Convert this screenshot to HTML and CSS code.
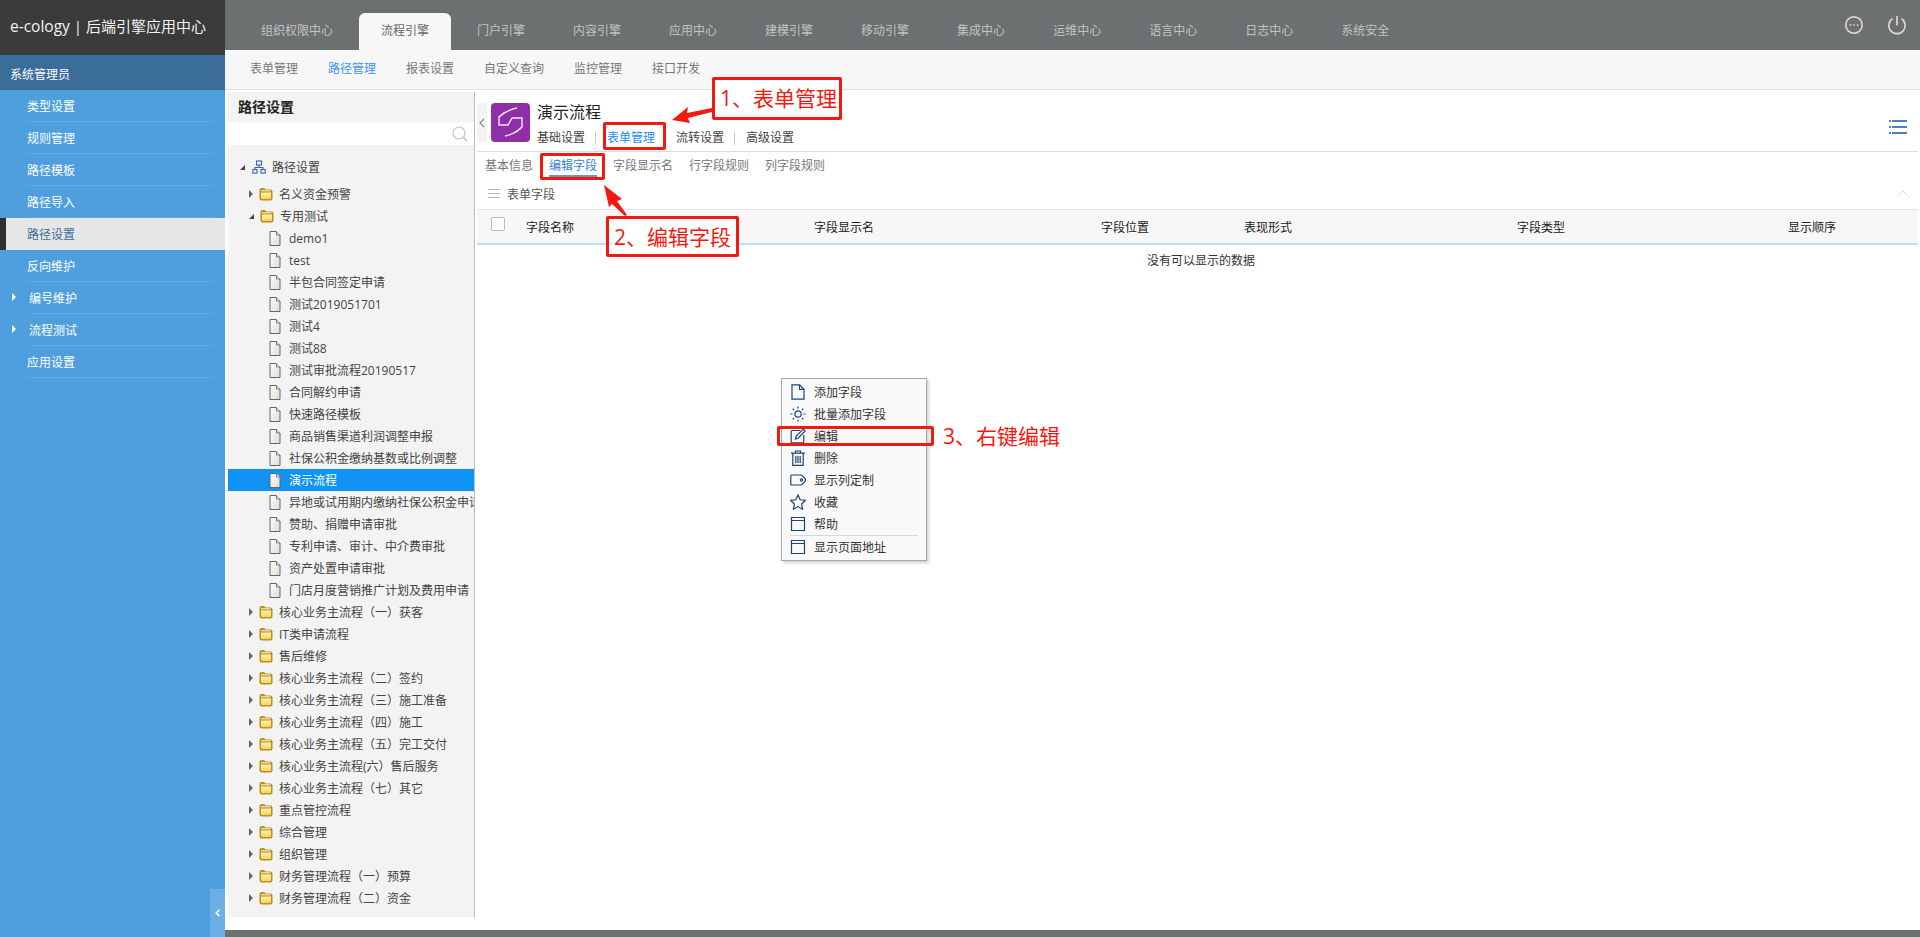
FILE: index.html
```html
<!DOCTYPE html>
<html lang="zh-CN">
<head>
    <meta charset="UTF-8">
    <link rel="stylesheet" href="styles.css">
    <title>e-cology | 后端引擎应用中心</title>
</head>
<body>
<svg class="sprites" width="0" height="0">
    <defs>
        <linearGradient id="folder-fill" x1="0" y1="0" x2="0" y2="1">
            <stop offset="0" stop-color="#fff3b0"/>
            <stop offset="1" stop-color="#f5d45e"/>
        </linearGradient>
        <linearGradient id="doc-fill" x1="0" y1="0" x2="1" y2="1">
            <stop offset="0" stop-color="#ffffff"/>
            <stop offset="1" stop-color="#dcdcd0"/>
        </linearGradient>
    </defs>
    <symbol id="folder" viewBox="0 0 14 14">
        <path d="M.5 3Q.5 1 2.5 1H5L6.5 2.5H11.5Q13.5 2.5 13.5 4.5V11.5Q13.5 13.5 11.5 13.5H2.5Q.5 13.5 .5 11.5Z" fill="#b8921f"/>
        <path d="M2 5.5H12V11Q12 12 11 12H3Q2 12 2 11Z" fill="url(#folder-fill)"/>
        <path d="M2 3.2H11.5V4.4H2Z" fill="#f7ecc0"/>
    </symbol>
    <symbol id="doc" viewBox="0 0 12 15">
        <path d="M1 .5H7.5L11 4V14.5H1Z" fill="url(#doc-fill)" stroke="#666"/>
        <path d="M7.5 .5V4H11" fill="#eee" stroke="#777"/>
    </symbol>
</svg>

<aside class="sidebar">
    <div class="brand"><span class="brand-en">e-cology</span> | 后端引擎应用中心</div>
    <div class="user">系统管理员</div>
    <ul class="side-menu">
        <li>类型设置</li>
        <li>规则管理</li>
        <li>路径模板</li>
        <li>路径导入</li>
        <li class="active">路径设置</li>
        <li>反向维护</li>
        <li class="has-sub">编号维护</li>
        <li class="has-sub">流程测试</li>
        <li>应用设置</li>
    </ul>
    <div class="collapse">
        <svg width="6" height="8" viewBox="0 0 6 8"><path d="M4.5 .8L1.3 4L4.5 7.2" fill="none" stroke="#fff" stroke-width="1.6"/></svg>
    </div>
</aside>

<div class="page">
    <header class="topbar">
        <nav class="top-tabs">
            <a>组织权限中心</a>
            <a class="active">流程引擎</a>
            <a>门户引擎</a>
            <a>内容引擎</a>
            <a>应用中心</a>
            <a>建模引擎</a>
            <a>移动引擎</a>
            <a>集成中心</a>
            <a>运维中心</a>
            <a>语言中心</a>
            <a>日志中心</a>
            <a>系统安全</a>
        </nav>
        <div class="top-icons">
            <svg width="20" height="20" viewBox="0 0 20 20" fill="none" stroke="#d6d6d6" stroke-width="1.7">
                <circle cx="10" cy="10" r="8.2"/>
                <path d="M5.6 10h1.7M9.2 10h1.7M12.8 10h1.7"/>
            </svg>
            <svg width="20" height="20" viewBox="0 0 20 20" fill="none" stroke="#d6d6d6" stroke-width="1.7">
                <path d="M5.5 3.6A8.2 8.2 0 1 0 14.5 3.6"/>
                <path d="M10 1V10.5"/>
            </svg>
        </div>
    </header>

    <nav class="sub-nav">
        <a>表单管理</a>
        <a class="active">路径管理</a>
        <a>报表设置</a>
        <a>自定义查询</a>
        <a>监控管理</a>
        <a>接口开发</a>
    </nav>

    <div class="workspace">
        <section class="tree-panel">
            <h3>路径设置</h3>
            <div class="tree-search">
                <svg width="16" height="16" viewBox="0 0 16 16" fill="none" stroke="#c4c4c4" stroke-width="1.2">
                    <circle cx="7" cy="7" r="6"/>
                    <path d="M11.5 11.5L15 15" stroke-width="1.6"/>
                </svg>
            </div>
            <div class="tree">
                <div class="row root">
                    <i class="tri open"></i>
                    <svg class="org" width="14" height="14" viewBox="0 0 14 14" fill="none" stroke="#3d62b5" stroke-width="1.1">
                        <rect x="4.5" y="1" width="5" height="4"/>
                        <rect x=".8" y="9.5" width="4.2" height="3.6"/>
                        <rect x="9" y="9.5" width="4.2" height="3.6"/>
                        <path d="M7 5V7.5M3 9.5V7.5H11V9.5"/>
                    </svg>
                    <span>路径设置</span>
                </div>
                <div class="rows" id="tree-rows"></div>
            </div>
        </section>

        <main class="content">
            <div class="flow-head">
                <div class="back">
                    <svg width="6" height="10" viewBox="0 0 6 10"><path d="M5 1L1 5L5 9" fill="none" stroke="#888" stroke-width="1.2"/></svg>
                </div>
                <div class="flow-icon">
                    <svg width="39" height="39" viewBox="0 0 39 39" fill="none" stroke="#f3e6f7" stroke-width="1.4">
                        <path d="M26 5Q18 6 8 14V22H17L21 15H31V24Q24 31 14 33"/>
                        <path d="M8 14L14 9M31 24L25 29"/>
                    </svg>
                </div>
                <div class="flow-info">
                    <div class="flow-title">演示流程</div>
                    <nav class="flow-nav">
                        <a>基础设置</a><i></i>
                        <a class="active">表单管理</a>
                        <a class="next">流转设置</a><i></i>
                        <a>高级设置</a>
                    </nav>
                </div>
                <svg class="list-icon" width="18" height="14" viewBox="0 0 18 14" fill="#4a80c4">
                    <rect y="0" width="2" height="2"/><rect x="3" y="0" width="15" height="2"/>
                    <rect y="6" width="2" height="2"/><rect x="3" y="6" width="15" height="2"/>
                    <rect y="12" width="2" height="2"/><rect x="3" y="12" width="15" height="2"/>
                </svg>
            </div>

            <nav class="form-tabs">
                <a>基本信息</a>
                <a class="active">编辑字段</a>
                <a>字段显示名</a>
                <a>行字段规则</a>
                <a>列字段规则</a>
            </nav>

            <div class="group-title">
                <svg width="12" height="9" viewBox="0 0 12 9" fill="#b5b5b5">
                    <rect width="12" height="1"/><rect y="4" width="12" height="1"/><rect y="8" width="12" height="1"/>
                </svg>
                <span>表单字段</span>
                <svg class="fold" width="12" height="7" viewBox="0 0 12 7"><path d="M.5 6.5L6 1L11.5 6.5" fill="none" stroke="#dcdcdc"/></svg>
            </div>

            <div class="grid-head">
                <span><i class="check"></i></span>
                <span>字段名称</span>
                <span>字段显示名</span>
                <span>字段位置</span>
                <span>表现形式</span>
                <span>字段类型</span>
                <span>显示顺序</span>
            </div>
            <div class="grid-empty">没有可以显示的数据</div>
        </main>
    </div>
</div>

<ul class="context-menu">
    <li>
        <svg viewBox="0 0 16 16"><path d="M2 .8H9.5L14 5.3V15.2H2Z"/><path d="M9.5 .8V5.3H14"/></svg>添加字段
    </li>
    <li>
        <svg viewBox="0 0 16 16"><circle cx="8" cy="8" r="3.2"/><path d="M8 .5V2.5M8 13.5V15.5M.5 8H2.5M13.5 8H15.5M2.7 2.7L4 4M12 12L13.3 13.3M2.7 13.3L4 12M12 4L13.3 2.7"/></svg>批量添加字段
    </li>
    <li>
        <svg viewBox="0 0 16 16"><path d="M10 2.5H2.5A1.2 1.2 0 0 0 1.2 3.7V14.8H12.5A1.2 1.2 0 0 0 13.8 13.6V7"/><path d="M5.5 11L6.2 8L13.2 1L15.2 3L8.2 10Z"/></svg>编辑
    </li>
    <li>
        <svg viewBox="0 0 16 16"><path d="M1 3.2H15M5.5 3V1H10.5V3M2.8 3.2V15.3H13.2V3.2M5.8 6V13M8 6V13M10.2 6V13"/></svg>删除
    </li>
    <li>
        <svg viewBox="0 0 16 16"><path d="M1.8 3H11.5L15.3 6.8V9.2L11.5 13H1.8Q.8 13 .8 12V4Q.8 3 1.8 3Z"/><circle cx="11.5" cy="8" r="1.2"/></svg>显示列定制
    </li>
    <li>
        <svg viewBox="0 0 16 16"><path d="M8 1L10.2 5.8L15.4 6.4L11.6 10L12.6 15.2L8 12.6L3.4 15.2L4.4 10L.6 6.4L5.8 5.8Z"/></svg>收藏
    </li>
    <li>
        <svg viewBox="0 0 16 16"><path d="M1.5 1.5H14.5V14.5H1.5ZM1.5 4.5H14.5"/></svg>帮助
    </li>
    <li class="divided">
        <svg viewBox="0 0 16 16"><path d="M1.5 1.5H14.5V14.5H1.5ZM1.5 4.5H14.5"/></svg>显示页面地址
    </li>
</ul>

<div class="note note-one">1、表单管理</div>
<div class="note note-two">2、编辑字段</div>
<div class="mark mark-nav"></div>
<div class="mark mark-tab"></div>
<div class="mark mark-menu"></div>
<div class="note-plain">3、右键编辑</div>
<svg class="arrows" width="1920" height="937" viewBox="0 0 1920 937" fill="#f5180f">
    <path d="M672 120L688 107L687 113L712 108L712 112L688 118L690 123Z"/>
    <path d="M604 185L622 199L617 201L627 215L625 216L612 204L609 207Z"/>
</svg>

<script src="tree.js"></script>
</body>
</html>
```

FILE: styles.css
```css
* {
    box-sizing: border-box;
}

html, body {
    margin: 0;
    height: 100%;
}

body {
    display: flex;
    height: 937px;
    overflow: hidden;
    position: relative;
    font-family: "Open Sans", "Noto Sans CJK SC", sans-serif;
    font-size: 12px;
    color: #333;
    background-color: #fff;
}

ul {
    list-style: none;
    margin: 0;
    padding: 0;
}

.sprites {
    position: absolute;
}

/* left menu */
.sidebar {
    width: 225px;
    flex: none;
    position: relative;
    background-color: #4f9fdf;
    color: #fff;
}

.brand {
    height: 55px;
    padding-left: 10px;
    line-height: 52px;
    font-size: 15px;
    color: #f2f2f2;
    background-color: #3b3b3b;
}

.brand-en {
    font-size: 15.5px;
}

.user {
    height: 35px;
    padding-left: 10px;
    line-height: 40px;
    background-color: #3a6d99;
}

.side-menu li {
    height: 32px;
    line-height: 33px;
    margin-left: 27px;
    margin-right: 10px;
    border-bottom: 1px solid #5ba9e8;
}

.side-menu li.active {
    margin: 0;
    padding-left: 21px;
    color: #3a6d99;
    background-color: #e6e6e6;
    border-bottom: 0;
    border-left: 6px solid #2e2e2e;
}

.side-menu li.has-sub {
    position: relative;
    margin-left: 29px;
}

.side-menu li.has-sub::before {
    content: "";
    position: absolute;
    left: -17px;
    top: 11px;
    border-style: solid;
    border-width: 4px 0 4px 4px;
    border-color: transparent transparent transparent #fff;
}

.collapse {
    position: absolute;
    right: 0;
    bottom: 0;
    width: 15px;
    height: 48px;
    display: flex;
    align-items: center;
    justify-content: center;
    background-color: #6daee4;
}

/* top */
.page {
    flex: 1;
    min-width: 0;
    display: flex;
    flex-direction: column;
    border-bottom: 7px solid #6d7070;
}

.topbar {
    height: 50px;
    flex: none;
    display: flex;
    justify-content: space-between;
    background-color: #6d7070;
}

.top-tabs {
    display: flex;
    padding: 13px 0 0 14px;
}

.top-tabs a {
    height: 37px;
    padding: 0 22px;
    margin-right: 4px;
    line-height: 36px;
    color: #c3c3c3;
    border-radius: 6px 6px 0 0;
}

.top-tabs a.active {
    color: #666;
    background-color: #f7f7f7;
}

.top-icons {
    display: flex;
    gap: 23px;
    padding: 15px 13px 0 0;
}

.sub-nav {
    height: 40px;
    flex: none;
    display: flex;
    gap: 30px;
    padding-left: 25px;
    line-height: 38px;
    color: #777;
    background-color: #f7f7f7;
    border-bottom: 1px solid #e2e2e2;
}

.sub-nav a.active {
    color: #3d95f2;
}

.workspace {
    flex: 1;
    min-height: 0;
    display: flex;
}

/* tree */
.tree-panel {
    width: 247px;
    flex: none;
    margin: 2px 0 13px 3px;
    display: flex;
    flex-direction: column;
    background-color: #f3f3f3;
    border-right: 1px solid #bcbcbc;
    overflow: hidden;
}

.tree-panel h3 {
    height: 30px;
    margin: 0;
    padding-left: 10px;
    line-height: 30px;
    font-size: 14px;
    font-weight: bold;
    color: #222;
}

.tree-search {
    height: 23px;
    flex: none;
    display: flex;
    align-items: center;
    justify-content: flex-end;
    padding-right: 6px;
    background-color: #fff;
}

.tree {
    flex: 1;
    padding-top: 11px;
}

.row {
    display: flex;
    align-items: center;
    height: 22px;
    white-space: nowrap;
    color: #444;
}

.row.root {
    padding-left: 12px;
    margin-bottom: 5px;
}

.row .org {
    margin: 0 6px 0 1px;
}

.row.folder {
    padding-left: 21px;
}

.row.file {
    padding-left: 41px;
}

.row.file svg {
    width: 12px;
    height: 15px;
    margin-right: 8px;
    flex: none;
}

.row.folder svg {
    width: 14px;
    height: 14px;
    margin-right: 6px;
    flex: none;
}

.row.selected {
    color: #fff;
    background-color: #0f93f5;
}

.tri {
    width: 0;
    height: 0;
    flex: none;
    margin-right: 6px;
    border-style: solid;
    border-width: 4px 0 4px 4px;
    border-color: transparent transparent transparent #666;
}

.tri.open {
    width: 4px;
    height: 4px;
    border-width: 0 0 5px 5px;
    border-color: transparent transparent #444 transparent;
}

/* main part */
.content {
    flex: 1;
    min-width: 0;
    margin: 0 2px 0 2px;
}

.flow-head {
    height: 62px;
    display: flex;
    padding: 13px 0 0 0;
    border-bottom: 1px solid #dcdcdc;
    position: relative;
}

.back {
    width: 10px;
    height: 39px;
    flex: none;
    display: flex;
    align-items: center;
    justify-content: center;
    background-color: #f3f3f3;
}

.flow-icon {
    width: 39px;
    height: 39px;
    flex: none;
    margin: 0 7px 0 4px;
    background-color: #8e2fa8;
    border-radius: 4px;
}

.flow-icon svg {
    display: block;
}

.flow-title {
    font-size: 16px;
    line-height: 18px;
    color: #222;
}

.flow-nav {
    display: flex;
    align-items: center;
    margin-top: 8px;
    line-height: 18px;
    color: #444;
}

.flow-nav i {
    width: 1px;
    height: 13px;
    margin: 0 11px 0 10px;
    background-color: #ccc;
}

.flow-nav a.active {
    color: #1c8cf0;
}

.flow-nav a.next {
    margin-left: 21px;
}

.list-icon {
    position: absolute;
    right: 11px;
    top: 30px;
}

.form-tabs {
    height: 26px;
    display: flex;
    gap: 16px;
    padding-left: 8px;
    line-height: 27px;
    color: #777;
}

.form-tabs a {
    height: 25px;
}

.form-tabs a.active {
    color: #3b7fd0;
    border-bottom: 2px solid #6f90d0;
}

.group-title {
    height: 32px;
    display: flex;
    align-items: center;
    gap: 7px;
    padding: 0 9px 0 11px;
    color: #555;
    border-bottom: 1px solid #e3e3e3;
}

.group-title .fold {
    margin-left: auto;
}

.grid-head {
    height: 35px;
    display: grid;
    grid-template-columns: 35px 288px 287px 143px 273px 271px 1fr;
    align-items: center;
    padding-left: 14px;
    color: #222;
    background-color: #f7f7f7;
    border-bottom: 2px solid #b9dffa;
}

.check {
    display: block;
    width: 14px;
    height: 14px;
    margin-top: -5px;
    background-color: #fff;
    border: 1px solid #bbb;
    border-radius: 2px;
}

.grid-empty {
    padding: 7px 0 0 7px;
    line-height: 18px;
    text-align: center;
    color: #333;
}

/* right click menu */
.context-menu {
    position: absolute;
    left: 781px;
    top: 378px;
    width: 146px;
    height: 183px;
    padding-top: 2px;
    background-color: #f9f9f9;
    border: 1px solid #a8a8a8;
    box-shadow: 2px 2px 3px rgba(0, 0, 0, 0.18);
    color: #333;
}

.context-menu li {
    height: 22px;
    display: flex;
    align-items: center;
    gap: 8px;
    padding-left: 8px;
}

.context-menu li.divided {
    height: 23px;
    margin: 0 8px;
    padding-left: 0;
    border-top: 1px solid #d8d8d8;
}

.context-menu svg {
    width: 16px;
    height: 16px;
    fill: none;
    stroke: #1f4673;
    stroke-width: 1.2;
    flex: none;
}

/* red notes on the picture */
.note, .mark {
    position: absolute;
    border: 3px solid #f5180f;
    border-radius: 2px;
}

.note, .note-plain {
    font-size: 21px;
    line-height: 24px;
    color: #f5180f;
    white-space: nowrap;
}

.note-one {
    left: 712px;
    top: 77px;
    width: 130px;
    height: 43px;
    padding: 6px 0 0 5px;
    background-color: #fff;
}

.note-two {
    left: 606px;
    top: 216px;
    width: 133px;
    height: 41px;
    padding: 6px 0 0 5px;
    background-color: #fff;
}

.mark-nav {
    left: 603px;
    top: 122px;
    width: 63px;
    height: 28px;
}

.mark-tab {
    left: 540px;
    top: 153px;
    width: 65px;
    height: 27px;
}

.mark-menu {
    left: 777px;
    top: 426px;
    width: 157px;
    height: 20px;
}

.note-plain {
    position: absolute;
    left: 943px;
    top: 424px;
}

.arrows {
    position: absolute;
    left: 0;
    top: 0;
    pointer-events: none;
}
```

FILE: tree.js
```js
// tree data: [text, type, open]
const treeData = [
    ["名义资金预警", "folder"],
    ["专用测试", "folder", true],
    ["demo1", "file"],
    ["test", "file"],
    ["半包合同签定申请", "file"],
    ["测试2019051701", "file"],
    ["测试4", "file"],
    ["测试88", "file"],
    ["测试审批流程20190517", "file"],
    ["合同解约申请", "file"],
    ["快速路径模板", "file"],
    ["商品销售渠道利润调整申报", "file"],
    ["社保公积金缴纳基数或比例调整", "file"],
    ["演示流程", "file selected"],
    ["异地或试用期内缴纳社保公积金申请", "file"],
    ["赞助、捐赠申请审批", "file"],
    ["专利申请、审计、中介费审批", "file"],
    ["资产处置申请审批", "file"],
    ["门店月度营销推广计划及费用申请", "file"],
    ["核心业务主流程（一）获客", "folder"],
    ["IT类申请流程", "folder"],
    ["售后维修", "folder"],
    ["核心业务主流程（二）签约", "folder"],
    ["核心业务主流程（三）施工准备", "folder"],
    ["核心业务主流程（四）施工", "folder"],
    ["核心业务主流程（五）完工交付", "folder"],
    ["核心业务主流程(六）售后服务", "folder"],
    ["核心业务主流程（七）其它", "folder"],
    ["重点管控流程", "folder"],
    ["综合管理", "folder"],
    ["组织管理", "folder"],
    ["财务管理流程（一）预算", "folder"],
    ["财务管理流程（二）资金", "folder"]
];

const box = document.getElementById("tree-rows");
box.innerHTML = treeData.map(function (item) {
    if (item[1].indexOf("folder") === 0) {
        const tri = item[2] ? "tri open" : "tri";
        return `<div class="row folder"><i class="${tri}"></i><svg><use href="#folder"/></svg><span>${item[0]}</span></div>`;
    }
    return `<div class="row ${item[1]}"><svg><use href="#doc"/></svg><span>${item[0]}</span></div>`;
}).join("");
```
